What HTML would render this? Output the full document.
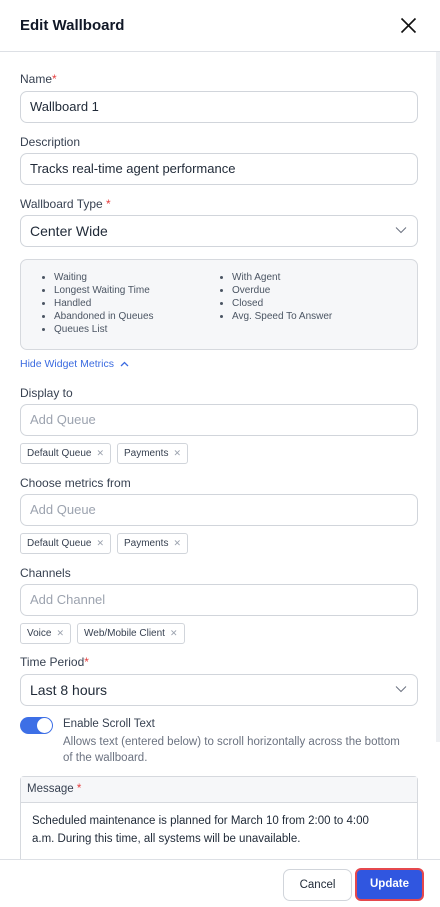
<!DOCTYPE html>
<html><head><style>
*{box-sizing:border-box;margin:0;padding:0}
body{width:440px;height:907px;overflow:hidden;background:#fff;font-family:"Liberation Sans",sans-serif;color:#1f2937;position:relative}
.a{position:absolute}
.lbl{position:absolute;left:20px;font-size:12px;color:#374151}
.req{color:#e53e3e}
.inp{position:absolute;left:20px;width:398px;height:32px;border:1px solid #d1d5db;border-radius:7px;font-size:13px;padding-left:9px;line-height:30px;color:#1f2937}
.ph{color:#9ca3af}
.chip{position:absolute;height:21px;border:1px solid #d1d5db;border-radius:3px;font-size:10px;line-height:19px;padding:0 6px;color:#374151}
.chip span{color:#9ca3af;margin-left:5px;font-size:9px}
.chev{position:absolute;right:10px;top:10px}
ul{list-style:disc;font-size:10px;color:#4b5563;line-height:13px}
</style></head><body>
<div class="a" style="left:0;top:0;width:440px;height:52px;border-bottom:1px solid #dde0e5"></div>
<div class="a" style="left:20px;top:17px;font-size:15px;font-weight:bold;color:#111827">Edit Wallboard</div>
<svg class="a" style="left:400px;top:17px" width="17" height="17" viewBox="0 0 17 17"><path d="M1.5 1.5L15.5 15.5M15.5 1.5L1.5 15.5" stroke="#111" stroke-width="1.6"/></svg>
<div class="a" style="left:436px;top:52px;width:4px;height:690px;background:#eef0f3"></div>

<div class="lbl" style="top:72px">Name<span class="req">*</span></div>
<div class="inp" style="top:91px">Wallboard 1</div>
<div class="lbl" style="top:135px">Description</div>
<div class="inp" style="top:153px">Tracks real-time agent performance</div>
<div class="lbl" style="top:197px">Wallboard Type <span class="req">*</span></div>
<div class="inp" style="top:215px;font-size:14px">Center Wide<svg class="chev" width="12" height="8" viewBox="0 0 12 8"><path d="M1 1.5L6 6.5L11 1.5" stroke="#6b7280" fill="none" stroke-width="1"/></svg></div>

<div class="a" style="left:20px;top:259px;width:398px;height:91px;background:#f6f7f9;border:1px solid #d6d9de;border-radius:7px"></div>
<ul class="a" style="left:54px;top:271px"><li>Waiting</li><li>Longest Waiting Time</li><li>Handled</li><li>Abandoned in Queues</li><li>Queues List</li></ul>
<ul class="a" style="left:232px;top:271px"><li>With Agent</li><li>Overdue</li><li>Closed</li><li>Avg. Speed To Answer</li></ul>
<div class="a" style="left:20px;top:358px;font-size:10.5px;color:#3b6be0">Hide Widget Metrics <svg width="9" height="6" viewBox="0 0 9 6" style="margin-left:3px"><path d="M1 5L4.5 1.5L8 5" stroke="#3b6be0" fill="none" stroke-width="1.3"/></svg></div>

<div class="lbl" style="top:386px">Display to</div>
<div class="inp ph" style="top:404px">Add Queue</div>
<div class="chip" style="left:20px;top:443px">Default Queue<span>✕</span></div>
<div class="chip" style="left:117px;top:443px">Payments<span>✕</span></div>

<div class="lbl" style="top:476px">Choose metrics from</div>
<div class="inp ph" style="top:494px">Add Queue</div>
<div class="chip" style="left:20px;top:533px">Default Queue<span>✕</span></div>
<div class="chip" style="left:117px;top:533px">Payments<span>✕</span></div>

<div class="lbl" style="top:566px">Channels</div>
<div class="inp ph" style="top:584px">Add Channel</div>
<div class="chip" style="left:20px;top:623px">Voice<span>✕</span></div>
<div class="chip" style="left:77px;top:623px">Web/Mobile Client<span>✕</span></div>

<div class="lbl" style="top:655px">Time Period<span class="req">*</span></div>
<div class="inp" style="top:674px;font-size:14px">Last 8 hours<svg class="chev" width="12" height="8" viewBox="0 0 12 8"><path d="M1 1.5L6 6.5L11 1.5" stroke="#6b7280" fill="none" stroke-width="1"/></svg></div>

<div class="a" style="left:20px;top:717px;width:33px;height:17px;border-radius:9px;background:#3d6fe6"></div>
<div class="a" style="left:37px;top:718px;width:15px;height:15px;border-radius:50%;background:#fff"></div>
<div class="a" style="left:63px;top:718px;font-size:11.5px;color:#374151">Enable Scroll Text</div>
<div class="a" style="left:63px;top:734px;font-size:11.5px;color:#6b7280;line-height:16px;width:360px">Allows text (entered below) to scroll horizontally across the bottom<br>of the wallboard.</div>

<div class="a" style="left:20px;top:776px;width:398px;height:120px;border:1px solid #d6d9de;border-radius:4px 4px 0 0"></div>
<div class="a" style="left:21px;top:777px;width:396px;height:26px;background:#f6f7f9;border-bottom:1px solid #d6d9de;font-size:11.5px;color:#374151;padding:6px 0 0 6px">Message <span class="req">*</span></div>
<div class="a" style="left:32px;top:812px;width:380px;font-size:11.5px;line-height:18px;color:#1f2937">Scheduled maintenance is planned for March 10 from 2:00 to 4:00<br>a.m. During this time, all systems will be unavailable.</div>

<div class="a" style="left:0;top:859px;width:440px;height:48px;background:#fff;border-top:1px solid #dde0e5"></div>
<div class="a" style="left:283px;top:869px;width:69px;height:32px;border:1px solid #d1d5db;border-radius:7px;font-size:11.5px;text-align:center;line-height:30px;color:#1f2937">Cancel</div>
<div class="a" style="left:355px;top:868px;width:69px;height:33px;border:2px solid #e5484d;border-radius:6px;background:#3056e0;color:#fff;font-size:11.5px;font-weight:bold;text-align:center;line-height:29px">Update</div>
</body></html>
